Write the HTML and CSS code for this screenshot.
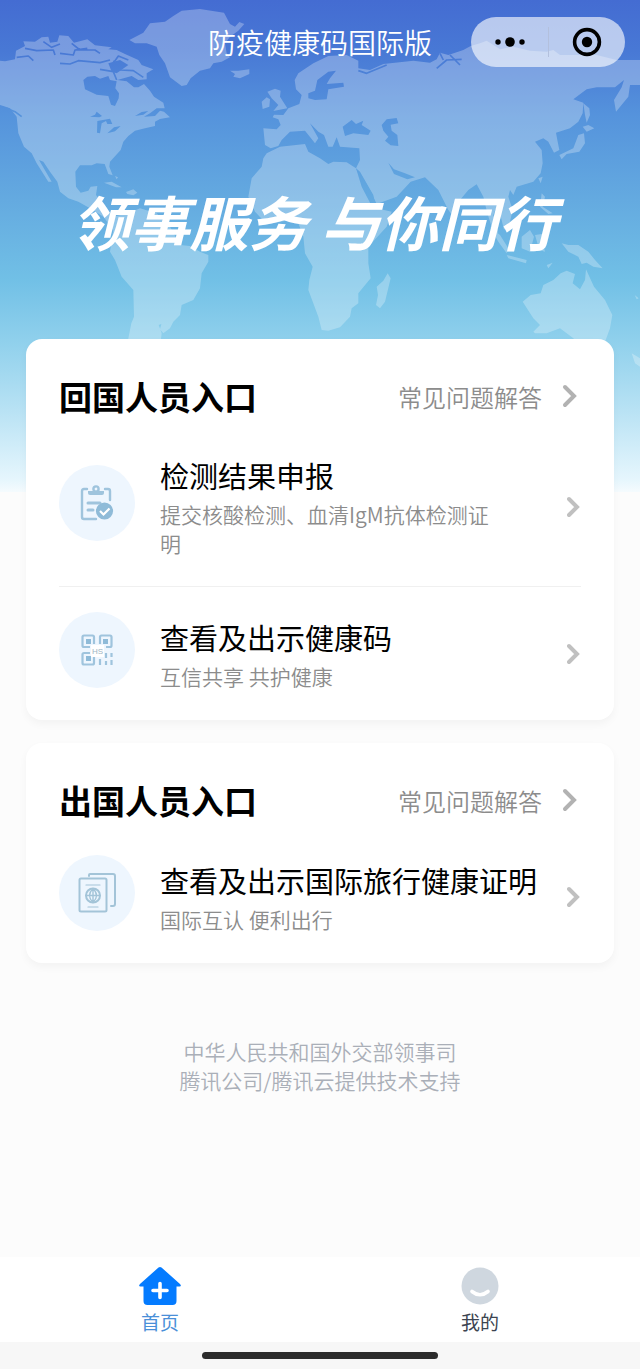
FILE: index.html
```
<!DOCTYPE html>
<html lang="zh-CN">
<head>
	<meta charset="UTF-8">
	<meta name="viewport" content="width=device-width, initial-scale=1">
	<title>防疫健康码国际版</title>
	<link rel="stylesheet" href="styles.css">
</head>

<body>
<div class="page">
	<!-- world map behind the header -->
	<svg class="map" viewBox="0 0 1920 1110" aria-hidden="true">
		<mask id="water">
			<rect width="1920" height="1110" fill="#fff"/>
			<g fill="#000">
				<!-- Hudson Bay and the great lakes -->
				<path d="M250 240L262 230L285 228L300 236L325 228L330 240L350 244L346 265L357 280L356 295L345 318L333 314L325 288L290 284L255 268Z"/>
				<path d="M270 350L285 344L290 335L306 348L298 352ZM292 363L330 356L337 372L322 372L318 363L305 370L300 400L291 398ZM322 400L342 382L362 378L345 394ZM405 348L425 336L445 333L430 344Z"/>
				<!-- Baltic, White Sea, Black Sea, Caspian, Red Sea -->
				<path d="M925 280L945 272L952 240L985 215L1008 212L990 235L980 252L1030 248L1032 260L985 268L980 298L945 300L925 295Z"/>
				<path d="M1028 380L1055 360L1068 372L1090 362L1085 375L1112 392L1105 405L1060 400L1035 408ZM1145 375L1160 358L1190 354L1195 370L1172 374L1175 392L1192 405L1195 438L1172 436L1155 422L1165 410L1150 392ZM1068 505L1080 515L1120 585L1125 612L1112 612L1085 560Z"/>
				<path d="M1165 488L1182 508L1215 520L1245 532L1222 538L1182 522Z"/>
			</g>
			<g fill="none" stroke="#000" stroke-width="5" stroke-linejoin="round">
				<path d="M50 172L85 168L100 182M75 145L110 152L160 150L165 165M130 125L155 142L180 132M180 160L220 165L225 150L262 145M180 190L210 192L235 182L300 188L330 180M215 130L240 150L285 150L300 160"/>
				<path d="M300 208L340 215L350 240M340 182L362 210L400 212L430 232M385 180L355 168L340 190M20 325L45 335L65 350"/>
				<path d="M1075 212L1100 220L1160 195M1310 205L1340 180L1385 178M1320 160L1330 180M1350 165L1380 195"/>
			</g>
			<path d="M325 190L360 180L385 195L350 220L335 215Z" fill="#000"/>
		</mask>
		<g fill="#fff" fill-opacity=".27" mask="url(#water)">
			<!-- North America -->
			<path d="M0 182L15 184L45 178L48 152L75 138L70 124L105 125L125 112L145 110L150 128L172 125L178 106L205 108L222 128L262 118L285 136L335 142L325 148L350 150L375 162L415 180L425 195L460 208L440 220L440 238L415 240L395 228L352 240L380 244L402 262L415 262L432 252L450 272L462 290L490 308L494 325L470 325L450 340L432 350L465 348L480 332L492 335L510 352L480 357L465 365L465 378L435 385L405 392L385 408L370 425L362 450L330 485L328 500L338 526L325 522L314 492L290 490L275 496L240 496L226 515L228 560L242 578L265 572L272 560L292 558L288 585L300 600L320 640L350 648L385 640L420 625L470 640L510 680L540 735L570 738L600 755L625 765L625 785L605 820L600 865L580 900L545 915L540 945L520 965L510 985L490 1000L480 988L484 972L476 975L485 1000L478 1060L376 1060L394 970L402 950L400 870L365 830L345 780L330 755L340 690L310 650L270 625L235 605L205 595L180 575L172 545L150 515L130 485L117 480L155 545L145 545L110 490L95 460L72 440L55 400L50 350L30 325L10 318L0 315Z"/>
			<path d="M312 548L335 545L365 562L348 562ZM378 576L400 568L412 578L400 586L382 582ZM345 528L354 532L350 538Z"/>
			<!-- Greenland, Iceland, British Isles -->
			<path d="M388 120L430 98L450 70L495 65L520 48L545 32L600 27L672 38L690 72L705 80L718 66L733 72L715 92L690 110L675 130L680 160L690 172L665 185L640 190L630 205L600 212L572 235L560 255L545 258L510 232L495 190L478 165L470 140L440 130L405 130Z"/>
			<path d="M690 212L715 212L748 208L748 222L720 235L700 230L705 222ZM802 275L825 266L842 272L840 290L862 325L820 333L835 315L815 295ZM785 305L800 292L810 298L808 320L788 327Z"/>
			<!-- Europe and Asia -->
			<path d="M790 385L830 388L842 375L835 358L818 352L822 344L850 345L865 325L898 312L905 285L888 268L884 240L895 220L940 190L985 168L1040 165L1075 182L1075 205L1110 210L1150 192L1240 182L1290 188L1310 178L1320 158L1345 165L1390 150L1412 138L1440 130L1460 122L1472 130L1500 148L1540 140L1590 152L1640 155L1660 150L1680 165L1790 165L1850 180L1920 180L1920 255L1890 255L1885 290L1848 335L1842 300L1865 262L1872 240L1845 262L1790 262L1760 268L1720 298L1750 308L1748 340L1735 365L1710 385L1668 398L1672 420L1678 450L1662 458L1645 425L1630 415L1605 425L1625 450L1628 490L1622 520L1600 545L1550 560L1540 585L1530 570L1525 590L1538 630L1530 665L1512 690L1500 640L1490 620L1480 645L1495 700L1478 690L1462 640L1450 590L1430 553L1405 570L1380 600L1368 660L1345 630L1315 570L1275 532L1232 545L1190 590L1130 612L1115 580L1080 520L1068 505L1080 480L1078 445L1020 440L1010 412L998 440L985 440L972 405L955 395L930 370L955 415L945 430L915 392L870 395L845 420L835 438L812 445L795 435Z"/>
			<!-- Africa and Madagascar -->
			<path d="M800 460L840 440L915 432L925 455L960 475L985 492L1000 485L1040 487L1068 505L1100 575L1130 625L1175 635L1160 680L1105 740L1105 790L1112 835L1075 880L1075 910L1055 925L1050 950L1020 982L985 992L965 990L955 950L925 870L928 840L938 800L915 760L910 710L895 670L860 662L800 672L765 635L745 590L755 535L785 500L790 475Z"/>
			<path d="M1130 860L1150 842L1163 820L1172 835L1155 905L1140 925L1128 915L1134 885Z"/>
			<!-- Japan, islands -->
			<path d="M1750 310L1768 325L1770 345L1760 368L1755 345ZM1748 380L1765 375L1783 385L1760 395ZM1735 405L1752 400L1755 430L1738 455L1700 462L1685 478L1678 465L1720 445ZM1615 535L1628 530L1622 550ZM1625 580L1635 590L1628 620L1658 640L1645 642L1620 620Z"/>
			<path d="M1470 680L1500 705L1525 745L1520 760L1495 725ZM1520 765L1580 780L1578 790L1525 775ZM1565 710L1590 690L1602 710L1590 755L1565 745ZM1605 705L1640 700L1625 715L1635 755L1618 750ZM1640 795L1658 788L1645 805Z"/>
			<path d="M1685 730L1705 735L1735 735L1765 755L1785 780L1808 805L1780 800L1760 788L1745 792L1735 770L1705 755Z"/>
			<!-- Australia, New Zealand -->
			<path d="M1600 995L1620 975L1600 955L1568 905L1592 885L1622 880L1630 855L1660 840L1682 820L1700 812L1725 822L1718 850L1740 868L1755 840L1758 808L1782 860L1815 900L1837 945L1830 985L1795 1080L1760 1060L1720 1015L1680 985L1640 1000L1605 1000Z"/>
			<path d="M1904 885L1916 895L1910 898ZM1895 1060L1920 1075L1920 1100L1905 1090Z"/>
		</g>
	</svg>

	<header class="header">
		<div class="navbar">
			<h1 class="navbar-title">防疫健康码国际版</h1>
			<div class="capsule">
				<button type="button" class="capsule-btn" aria-label="更多">
					<svg width="32" height="10" viewBox="0 0 32 10"><circle cx="4" cy="5" r="2.7"/><circle cx="16" cy="5" r="4.8"/><circle cx="28" cy="5" r="2.7"/></svg>
				</button>
				<button type="button" class="capsule-btn" aria-label="关闭">
					<svg width="30" height="30" viewBox="0 0 30 30"><circle cx="15" cy="15" r="12.4" fill="none" stroke="#000" stroke-width="3.6"/><circle cx="15" cy="15" r="5.2"/></svg>
				</button>
			</div>
		</div>
		<p class="slogan">领事服务 与你同行</p>
	</header>

	<main class="cards">
		<section class="card">
			<div class="card-head">
				<h2>回国人员入口</h2>
				<a class="faq" href="#faq-in">常见问题解答
					<svg class="arrow" width="16" height="24" viewBox="0 0 16 24"><path d="M3 3L12 12L3 21"/></svg>
				</a>
			</div>
			<a class="item" href="#report">
				<span class="item-icon">
					<svg width="34" height="36" viewBox="0 0 34 36">
						<g fill="none" stroke="#9fc4dd" stroke-width="2.4" stroke-linecap="round">
							<path d="M7 4H4Q2 4 2 6V32Q2 34 4 34H16M25 4H28Q30 4 30 6V15"/>
							<path d="M8 18H20M8 25H13" stroke-width="3"/>
							<circle cx="16" cy="4" r="2.6"/>
						</g>
						<path d="M8 6H24V8Q24 10 22 10H10Q8 10 8 8Z" fill="#9fc4dd"/>
						<circle cx="24.5" cy="26" r="8.6" fill="#8fbbd8"/>
						<path d="M20 26L23.5 29.5L29.500 23.500" fill="none" stroke="#fff" stroke-width="2.2"/>
					</svg>
				</span>
				<span class="item-text">
					<strong>检测结果申报</strong>
					<small>提交核酸检测、血清IgM抗体检测证明</small>
				</span>
				<svg class="arrow arrow-small" width="14" height="22" viewBox="0 0 14 22"><path d="M2 3L10 11L2 19"/></svg>
			</a>
			<a class="item" href="#health-code">
				<span class="item-icon">
					<svg width="32" height="32" viewBox="0 0 32 32">
						<g fill="none" stroke="#9fc4dd" stroke-width="2.2">
							<path d="M13 10V3Q13 1.500 11.500 1.500H3Q1.500 1.500 1.500 3V11.500Q1.500 13 3 13H9M19 10V3Q19 1.500 20.500 1.500H29Q30.500 1.500 30.500 3V11.500Q30.500 13 29 13H25M9 19H3Q1.500 19 1.500 20.500V29Q1.500 30.500 3 30.500H11.500Q13 30.500 13 29V23"/>
							<path d="M19 25V31M25 19V24M25 27V31M30.500 19V23M30.500 26V31"/>
						</g>
						<path d="M5 5H10V10H5ZM22 5H27V10H22ZM5 22H10V27H5Z" fill="#8fbbd8"/>
						<rect x="10" y="11" width="13" height="12" fill="#fff"/>
						<text class="qr-text" x="16.5" y="20" text-anchor="middle">HS</text>
					</svg>
				</span>
				<span class="item-text">
					<strong>查看及出示健康码</strong>
					<small>互信共享 共护健康</small>
				</span>
				<svg class="arrow arrow-small" width="14" height="22" viewBox="0 0 14 22"><path d="M2 3L10 11L2 19"/></svg>
			</a>
		</section>

		<section class="card">
			<div class="card-head">
				<h2>出国人员入口</h2>
				<a class="faq" href="#faq-out">常见问题解答
					<svg class="arrow" width="16" height="24" viewBox="0 0 16 24"><path d="M3 3L12 12L3 21"/></svg>
				</a>
			</div>
			<a class="item" href="#travel-code">
				<span class="item-icon">
					<svg width="38" height="40" viewBox="0 0 38 40">
						<g fill="none" stroke="#a3c4d8" stroke-width="2" stroke-linejoin="round" stroke-linecap="round">
							<path d="M11 3V2Q11 1 12 1H35Q37 1 37 3V31Q37 33 35 33H33"/>
							<rect x="1.5" y="5.5" width="27" height="33" rx="1.5"/>
							<circle cx="15" cy="22.5" r="7"/>
							<path d="M8 22.500H22M15 15.500V29.500M15 15.500Q8 22.500 15 29.500M15 15.500Q22 22.500 15 29.500" stroke-width="1.4"/>
							<path d="M8 12H22M10 34H20" stroke-width="1.2"/>
						</g>
					</svg>
				</span>
				<span class="item-text">
					<strong>查看及出示国际旅行健康证明</strong>
					<small>国际互认 便利出行</small>
				</span>
				<svg class="arrow arrow-small" width="14" height="22" viewBox="0 0 14 22"><path d="M2 3L10 11L2 19"/></svg>
			</a>
		</section>
	</main>

	<footer class="support">
		中华人民共和国外交部领事司<br>
		腾讯公司/腾讯云提供技术支持
	</footer>

	<nav class="tabbar">
		<a class="tab tab-active" href="#home">
			<svg width="44" height="40" viewBox="0 0 44 40">
				<path d="M20.500 1.500Q22 .300 23.500 1.500L42 18Q44 20.500 41.500 20.500H38.500V35Q38.500 39 34.500 39H9.500Q5.500 39 5.500 35V20.500H2.500Q0 20.500 2 18Z" fill="#047bff"/>
				<path d="M22 17.500V31.500M15 24.500H29" stroke="#fff" stroke-width="3.6" stroke-linecap="round"/>
			</svg>
			首页
		</a>
		<a class="tab" href="#mine">
			<svg width="44" height="40" viewBox="0 0 44 40">
				<circle cx="22" cy="20" r="18.5" fill="#cfd7df"/>
				<path d="M14 25.500Q22 32 30 25.500" fill="none" stroke="#fff" stroke-width="3.6" stroke-linecap="round"/>
			</svg>
			我的
		</a>
	</nav>
	<div class="home-bar"><span></span></div>
</div>
</body>
</html>
```
FILE: styles.css
```
body {
    margin: 0;
    font-family: "Noto Sans CJK SC", sans-serif;
    background-color: #fcfcfc;
    color: #000;
}

h1, h2, p {
    margin: 0;
}

a {
    color: inherit;
    text-decoration: none;
}

.page {
    position: relative;
    display: flex;
    flex-direction: column;
    min-height: 100vh;
    background: linear-gradient(#446cd2 0, #4878d5 50px, #5593dc 115px, #64aae0 200px, #71c0e6 280px, #8fd0ec 340px, #b8e2f4 410px, #e6f6fd 480px, #f5fbfe 492px) no-repeat;
    background-size: 100% 492px;
}

/* the map lies under all the content */
.map {
    position: absolute;
    top: 0;
    left: 0;
    width: 100%;
}

.header,
.cards {
    position: relative;
}

.navbar {
    display: grid;
    grid-template-columns: 1fr auto 1fr;
    align-items: center;
    padding: 17px 15px 0;
}

.navbar-title {
    grid-column: 2;
    font-size: 28px;
    font-weight: 350;
    line-height: 50px;
    color: #fff;
}

.capsule {
    display: flex;
    justify-self: end;
    width: 154px;
    height: 50px;
    border-radius: 25px;
    background-color: rgba(255, 255, 255, 0.62);
}

.capsule-btn {
    display: flex;
    flex: 1;
    align-items: center;
    justify-content: center;
    padding: 0;
    border: none;
    background: none;
    cursor: pointer;
}

.capsule-btn + .capsule-btn {
    background: linear-gradient(#b3c0dd, #b3c0dd) no-repeat left center;
    background-size: 1px 30px;
}

.slogan {
    padding: 112px 12px 76px 0;
    font-size: 59px;
    font-style: italic;
    font-weight: bold;
    line-height: 84px;
    text-align: center;
    white-space: nowrap;
    color: #fff;
}

.cards {
    display: flex;
    flex-direction: column;
    gap: 23px;
    padding: 0 26px;
}

.card {
    padding: 33px 33px 0;
    border-radius: 16px;
    background-color: #fff;
    box-shadow: 0 4px 8px rgba(0, 0, 0, 0.04);
}

.card-head {
    display: flex;
    align-items: center;
    justify-content: space-between;
    margin-bottom: 35px;
}

.card-head h2 {
    font-size: 33px;
    font-weight: bold;
    line-height: 48px;
}

.faq {
    display: flex;
    align-items: center;
    gap: 20px;
    padding-right: 3px;
    font-size: 24px;
    font-weight: 350;
    color: #8c8c8c;
}

.arrow {
    fill: none;
    stroke: #b2b2b2;
    stroke-width: 4;
    stroke-linecap: round;
}

.arrow-small {
    stroke: #c0c0c0;
}

.item {
    display: flex;
    align-items: center;
    padding-bottom: 28px;
}

.item + .item {
    padding-top: 29px;
    border-top: 1px solid #f0f0f0;
}

.item-icon {
    display: flex;
    flex: none;
    align-items: center;
    justify-content: center;
    width: 76px;
    height: 76px;
    margin: -4px 25px 4px 0;
    border-radius: 50%;
    background-color: #eef6fe;
}

.qr-text {
    font: 8px "Liberation Sans", sans-serif;
    fill: #9db4c3;
}

.item-text {
    flex: 1;
}

.item-text strong {
    display: block;
    margin-bottom: 5px;
    font-size: 29px;
    font-weight: normal;
    line-height: 40px;
    white-space: nowrap;
}

.item-text small {
    display: block;
    padding-right: 60px;
    font-size: 21px;
    font-weight: 350;
    line-height: 29px;
    color: #8c8c8c;
}

.support {
    padding: 74px 0 60px;
    font-size: 21px;
    font-weight: 350;
    line-height: 29px;
    text-align: center;
    color: #aaafb8;
}

.tabbar {
    display: flex;
    margin-top: auto;
    background-color: #fff;
}

.tab {
    display: flex;
    flex: 1;
    flex-direction: column;
    align-items: center;
    padding: 9px 0 4px;
    font-size: 19px;
    line-height: 32px;
    color: #3c4450;
}

.tab-active {
    color: #4a8fd8;
}

.home-bar {
    display: flex;
    justify-content: center;
    padding: 10px 0;
    background-color: #f7f7f7;
}

.home-bar span {
    width: 37%;
    height: 7px;
    border-radius: 4px;
    background-color: #2c2c2c;
}
```
